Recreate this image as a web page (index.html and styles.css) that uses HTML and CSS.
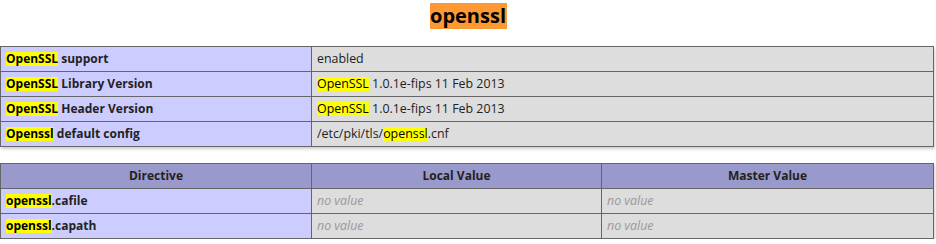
FILE: index.html
```html
<!DOCTYPE html>
<html>
<head>
<meta charset="utf-8">
<link rel="stylesheet" href="styles.css">
</head>
<body>
<h2 class="title"><span class="title-hl">openssl</span></h2>
<table class="info">
  <colgroup><col class="c-label"><col class="c-value"></colgroup>
  <tr><td class="e"><span class="hl">OpenSSL</span> support</td><td class="v">enabled</td></tr>
  <tr><td class="e"><span class="hl">OpenSSL</span> Library Version</td><td class="v"><span class="hl">OpenSSL</span> 1.0.1e-fips 11 Feb 2013</td></tr>
  <tr><td class="e"><span class="hl">OpenSSL</span> Header Version</td><td class="v"><span class="hl">OpenSSL</span> 1.0.1e-fips 11 Feb 2013</td></tr>
  <tr><td class="e"><span class="hl">Openssl</span> default config</td><td class="v">/etc/pki/tls/<span class="hl">openssl</span>.cnf</td></tr>
</table>
<table class="info second">
  <colgroup><col class="c-label"><col class="c-local"><col class="c-master"></colgroup>
  <tr class="h"><th>Directive</th><th>Local Value</th><th>Master Value</th></tr>
  <tr><td class="e"><span class="hl">openssl</span>.cafile</td><td class="v"><i class="nv">no value</i></td><td class="v"><i class="nv">no value</i></td></tr>
  <tr><td class="e"><span class="hl">openssl</span>.capath</td><td class="v"><i class="nv">no value</i></td><td class="v"><i class="nv">no value</i></td></tr>
</table>
</body>
</html>
```
FILE: styles.css
```css
html, body {
  margin: 0;
  padding: 0;
  background: #fff;
}
body {
  font-family: "Open Sans", "Noto Sans", sans-serif;
  font-size: 12px;
  color: #222;
}
.title {
  margin: 0;
  padding-top: 3px;
  height: 43px;
  text-align: center;
  font-size: 20px;
  line-height: 26px;
  font-weight: bold;
}
.title-hl {
  display: inline-block;
  background: #ff9933;
  color: #000;
  padding: 0 0.5px;
  height: 26px;
}
.info {
  border-collapse: collapse;
  table-layout: fixed;
  width: 933px;
  box-shadow: 1px 2px 3px #ccc;
}
.second {
  margin-top: 16px;
}
.c-label { width: 311px; }
.c-value { width: 622px; }
.c-local { width: 290px; }
.c-master { width: 332px; }
td, th {
  border: 1px solid #666;
  padding: 4px 5px;
  line-height: 16px;
  height: 16px;
  vertical-align: middle;
  white-space: nowrap;
  overflow: hidden;
}
.e {
  background: #ccf;
  font-weight: bold;
  text-align: left;
}
.v {
  background: #ddd;
  text-align: left;
  font-size: 12.4px;
}
.h th {
  background: #99c;
  font-weight: bold;
  text-align: center;
}
.hl {
  display: inline-block;
  line-height: 14px;
  background: #ffff00;
  color: #000;
}
.nv {
  color: #999;
}
```
